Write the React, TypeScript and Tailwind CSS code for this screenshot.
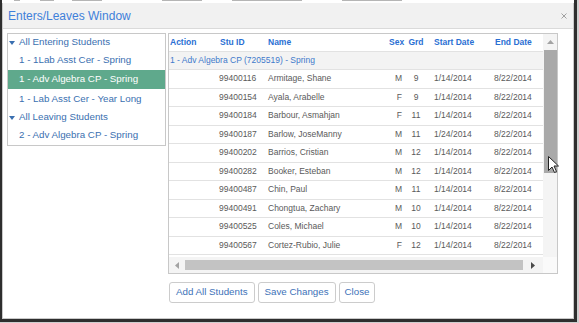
import React from "react";

const rows: [string, string, string, string, string][] = [
  ["99400116", "Armitage, Shane", "M", "9", "1/14/2014"],
  ["99400154", "Ayala, Arabelle", "F", "9", "1/14/2014"],
  ["99400184", "Barbour, Asmahjan", "F", "11", "1/14/2014"],
  ["99400187", "Barlow, JoseManny", "M", "11", "1/24/2014"],
  ["99400202", "Barrios, Cristian", "M", "12", "1/14/2014"],
  ["99400282", "Booker, Esteban", "M", "12", "1/14/2014"],
  ["99400487", "Chin, Paul", "M", "11", "1/14/2014"],
  ["99400491", "Chongtua, Zachary", "M", "10", "1/14/2014"],
  ["99400525", "Coles, Michael", "M", "10", "1/14/2014"],
  ["99400567", "Cortez-Rubio, Julie", "F", "12", "1/14/2014"],
];

function Tri() {
  return (
    <svg width="6" height="4" viewBox="0 0 6 4" className="shrink-0">
      <path d="M0 0 L6 0 L3 4 Z" fill="#3a6fb0" />
    </svg>
  );
}

export default function App() {
  return (
    <div className="relative w-[579px] h-[323px] bg-[#cfcfcf] overflow-hidden font-['Liberation_Sans',Arial,sans-serif]">
      <div className="w-[577px] h-[322px] bg-[#2e2e2e] pl-[2px] pr-[3px] pb-[3px] flex flex-col">
        {/* top strip (page behind) */}
        <div className="h-[3px] shrink-0 bg-white flex items-start">
          <div className="h-[1px] w-[6px] ml-[12px] bg-[#b5b5b5]" />
          <div className="h-[1px] w-[14px] ml-[20px] bg-[#b5b5b5]" />
          <div className="h-[1px] w-[30px] ml-[18px] bg-[#b5b5b5]" />
          <div className="h-[1px] w-[40px] ml-[60px] bg-[#b5b5b5]" />
          <div className="h-[1px] w-[70px] ml-[30px] bg-[#b5b5b5]" />
          <div className="h-[1px] w-[60px] ml-[40px] bg-[#b5b5b5]" />
        </div>
        {/* window */}
        <div className="flex-1 flex flex-col bg-white border border-t-0 border-[#c9c9c9]">
          <div className="h-[26px] shrink-0 bg-[#f1f1f1] border-b border-[#dadada] flex items-center justify-between pl-[5px] pr-[6px]">
            <span className="text-[12px] text-[#3f80da] leading-none">Enters/Leaves Window</span>
            <svg width="6" height="6" viewBox="0 0 6 6">
              <path d="M0.5 0.5 L5.5 5.5 M5.5 0.5 L0.5 5.5" stroke="#a0a0a0" strokeWidth="1" />
            </svg>
          </div>
          <div className="flex flex-row items-start gap-[2px] pt-[4px] pl-[4px]">
            {/* left tree */}
            <div className="w-[159px] border border-[#c8c8c8] flex flex-col text-[9.75px] text-[#3a6fb0]">
              <div className="h-[17px] flex items-center gap-[4px] pl-[1px]">
                <Tri />
                <span>All Entering Students</span>
              </div>
              <div className="h-[19px] flex items-center pl-[11px]">1 - 1Lab Asst Cer - Spring</div>
              <div className="h-[19px] flex items-center pl-[11px] bg-[#5fa98c] text-white">1 - Adv Algebra CP - Spring</div>
              <div className="h-[20px] flex items-center pl-[11px]">1 - Lab Asst Cer - Year Long</div>
              <div className="h-[17px] flex items-center gap-[4px] pl-[1px]">
                <Tri />
                <span>All Leaving Students</span>
              </div>
              <div className="h-[19px] flex items-center pl-[11px]">2 - Adv Algebra CP - Spring</div>
            </div>
            {/* right column */}
            <div className="flex flex-col">
              <div className="w-[390px] h-[241px] border border-[#c8c8c8] flex flex-col">
                <div className="h-[223px] flex flex-row">
                  <div className="w-[374px] overflow-hidden flex flex-col text-[8.5px]">
                    <div className="h-[18px] shrink-0 flex items-center border-b border-[#e2e2e2] font-bold text-[#2a6fd3]">
                      <div className="w-[50px] pl-[1px]">Action</div>
                      <div className="w-[49px] pl-[1px]">Stu ID</div>
                      <div className="w-[119px]">Name</div>
                      <div className="w-[20px] pl-[2px]">Sex</div>
                      <div className="w-[18px] text-center">Grd</div>
                      <div className="w-[65px] pl-[9px]">Start Date</div>
                      <div className="flex-1 pl-[5px]">End Date</div>
                    </div>
                    <div className="h-[18px] shrink-0 flex items-center pl-[1px] bg-[#f3f3f3] border-b border-[#e2e2e2] text-[#3f7acb]">
                      1 - Adv Algebra CP (7205519) - Spring
                    </div>
                    {rows.map((r) => (
                      <div key={r[0]} className="h-[18.5px] shrink-0 flex items-center border-b border-[#e2e2e2] text-[#5a5a5a]">
                        <div className="w-[50px]" />
                        <div className="w-[49px]">{r[0]}</div>
                        <div className="w-[119px]">{r[1]}</div>
                        <div className="w-[20px] text-right pr-[5px]">{r[2]}</div>
                        <div className="w-[18px] text-center">{r[3]}</div>
                        <div className="w-[65px] pl-[9px]">{r[4]}</div>
                        <div className="flex-1 pl-[4px]">8/22/2014</div>
                      </div>
                    ))}
                  </div>
                  {/* vertical scrollbar */}
                  <div className="w-[14px] bg-[#f4f4f4] flex flex-col">
                    <div className="h-[16px] flex items-center justify-center">
                      <svg width="7" height="4" viewBox="0 0 7 4">
                        <path d="M0 4 L7 4 L3.5 0 Z" fill="#a3a3a3" />
                      </svg>
                    </div>
                    <div className="h-[123px] ml-[1px] bg-[#a9a9a9]" />
                  </div>
                </div>
                {/* horizontal scrollbar */}
                <div className="h-[16px] flex flex-row">
                  <div className="w-[374px] bg-[#f4f4f4] flex flex-row items-center">
                    <div className="w-[16px] h-full flex items-center justify-center">
                      <svg width="4" height="7" viewBox="0 0 4 7">
                        <path d="M4 0 L4 7 L0 3.5 Z" fill="#a3a3a3" />
                      </svg>
                    </div>
                    <div className="w-[338px] h-[10px] bg-[#c3c3c3]" />
                    <div className="w-[20px] h-full flex items-center pl-[8px]">
                      <svg width="4" height="7" viewBox="0 0 4 7">
                        <path d="M0 0 L0 7 L4 3.5 Z" fill="#4a4a4a" />
                      </svg>
                    </div>
                  </div>
                  <div className="w-[14px] bg-[#fafafa]" />
                </div>
              </div>
              {/* buttons */}
              <div className="flex flex-row gap-[3px] mt-[8px] ml-[1px] text-[9.75px] text-[#3d72b8]">
                <button className="h-[21px] px-[6px] bg-white border border-[#cccccc] rounded-[3px]">Add All Students</button>
                <button className="h-[21px] px-[6px] bg-white border border-[#cccccc] rounded-[3px]">Save Changes</button>
                <button className="h-[21px] px-[5px] bg-white border border-[#cccccc] rounded-[3px]">Close</button>
              </div>
            </div>
          </div>
        </div>
      </div>
      {/* mouse cursor */}
      <svg className="absolute left-[548px] top-[156px]" width="12" height="18" viewBox="0 0 12 18">
        <path d="M0.5 0.5 L0.5 14.5 L4 11 L6.5 16.5 L8.5 15.5 L6 10 L10.5 10 Z" fill="white" stroke="#222" strokeWidth="1" />
      </svg>
    </div>
  );
}
